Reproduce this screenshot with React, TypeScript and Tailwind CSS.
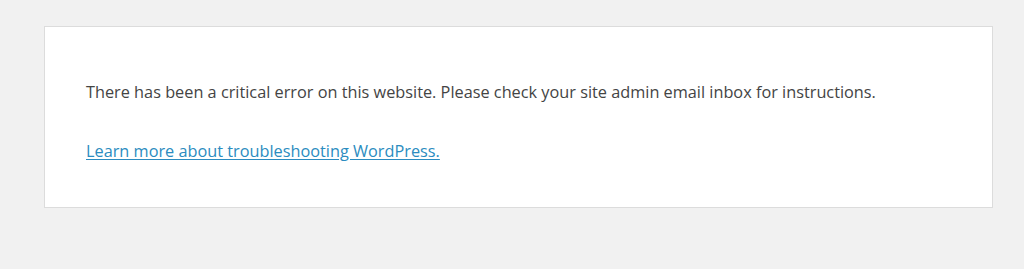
export default function App() {
  return (
    <div className="h-[269px] w-full bg-[#f1f1f1] pt-[26px] pl-[44px] pr-[31px]">
      <div
        className="h-[182px] border border-[#dcdcdc] bg-white pl-[41px] pt-[54px] text-[#444]"
        style={{ fontFamily: '"Open Sans", "Noto Sans", sans-serif' }}
      >
        <p className="text-[16.3px] leading-[22px]">
          There has been a critical error on this website. Please check your site admin email inbox for instructions.
        </p>
        <p className="mt-[37px] text-[16.3px] leading-[22px]">
          <a href="#" className="text-[#2b8cc0] underline underline-offset-2">
            Learn more about troubleshooting WordPress.
          </a>
        </p>
      </div>
    </div>
  );
}
